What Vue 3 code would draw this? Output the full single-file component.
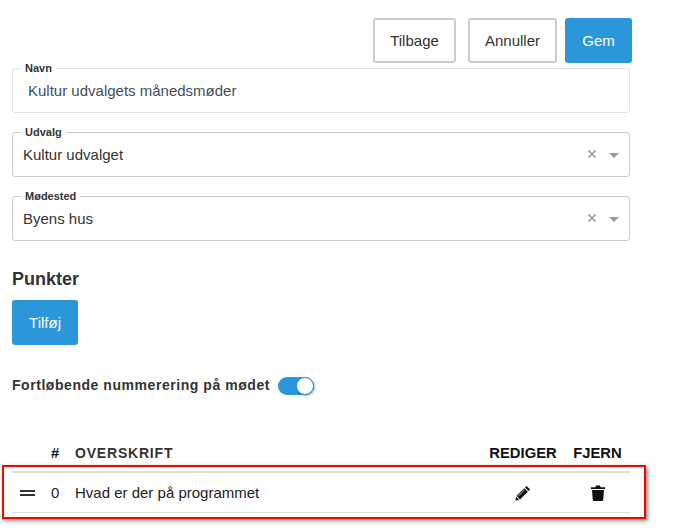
<template>
  <div class="page">
    <div class="actions">
      <button class="btn btn-light back">Tilbage</button>
      <button class="btn btn-light cancel">Annuller</button>
      <button class="btn btn-blue save">Gem</button>
    </div>

    <div class="field name-field">
      <label>Navn</label>
      <span class="value name-value">Kultur udvalgets månedsmøder</span>
    </div>

    <div v-for="s in selects" :key="s.label" class="field select-field">
      <label>{{ s.label }}</label>
      <span class="value">{{ s.value }}</span>
      <svg class="clear" width="10" height="10" viewBox="0 0 10 10">
        <path d="M1.5 1.5 L8.5 8.5 M8.5 1.5 L1.5 8.5" stroke="#999" stroke-width="1.6" fill="none" />
      </svg>
      <span class="caret"></span>
    </div>

    <h3>Punkter</h3>
    <button class="btn btn-blue add">Tilføj</button>

    <div class="numbering">
      <span>Fortløbende nummerering på mødet</span>
      <span class="toggle"><span class="knob"></span></span>
    </div>

    <div class="table">
      <div class="thead">
        <span class="c-drag"></span>
        <span class="c-num">#</span>
        <span class="c-title">OVERSKRIFT</span>
        <span class="c-edit">REDIGER</span>
        <span class="c-del">FJERN</span>
      </div>
      <div class="trow">
        <span class="c-drag"><span class="bars"></span></span>
        <span class="c-num">0</span>
        <span class="c-title">Hvad er der på programmet</span>
        <span class="c-edit">
          <svg width="16" height="16" viewBox="0 0 16 16">
            <path d="M11.6 0.9 L15.1 4.4 L13.5 6 L10 2.5 Z" fill="#111" />
            <path d="M9.3 3.2 L12.8 6.7 L5 14.5 L1.5 11 Z" fill="#111" />
            <path d="M1.1 11.8 L4.2 14.9 L0.4 15.6 Z" fill="#111" />
            <path d="M3 11.4 L9.6 4.8" stroke="#fff" stroke-width="0.7" fill="none" />
          </svg>
        </span>
        <span class="c-del">
          <svg width="14" height="16" viewBox="0 0 14 16">
            <path d="M0 2.2 H4.4 L5 0.6 H9 L9.6 2.2 H14 V4 H0 Z" fill="#111" />
            <path d="M1 5 H13 L12.2 15 Q12.1 16 11.1 16 H2.9 Q1.9 16 1.8 15 Z" fill="#111" />
          </svg>
        </span>
      </div>
    </div>

    <div class="highlight"></div>
  </div>
</template>

<script setup>
const selects = [
  { label: 'Udvalg', value: 'Kultur udvalget' },
  { label: 'Mødested', value: 'Byens hus' }
]
</script>

<style>
html, body {
  background: #fff;
}
</style>

<style scoped>
.page {
  position: relative;
  width: 675px;
  height: 532px;
  overflow: hidden;
  box-sizing: border-box;
  padding: 18px 45px 0 12px;
  font-family: "Liberation Sans", Arial, sans-serif;
  color: #333;
  font-size: 15px;
}

.actions {
  display: flex;
  justify-content: flex-end;
  margin-right: -2px;
}

.btn {
  height: 45px;
  box-sizing: border-box;
  border-radius: 3px;
  font-family: inherit;
  font-size: 15px;
  padding: 0;
  cursor: pointer;
}

.btn-light {
  background: #fff;
  border: 2px solid #ccc;
  color: #333;
}

.btn-blue {
  background: #2b96d9;
  border: none;
  color: #fff;
}

.back { width: 83px; margin-right: 12px; }
.cancel { width: 89px; margin-right: 8px; }
.save { width: 67px; }
.add { width: 66px; display: block; }

.field {
  position: relative;
  height: 45px;
  box-sizing: border-box;
  border: 1px solid #ccc;
  border-radius: 3px;
  display: flex;
  align-items: center;
  padding-left: 10px;
  margin-top: 19px;
  font-size: 15px;
}

.field label {
  position: absolute;
  left: 8px;
  top: -7px;
  padding: 0 4px;
  background: #fff;
  font-size: 11px;
  line-height: 12px;
  font-weight: 700;
  color: #333;
}

.name-field {
  margin-top: 5px;
  border-color: #dde5ee;
}

.name-value {
  padding-left: 5px;
  color: #3f4f5b;
}

.clear {
  position: absolute;
  right: 32px;
  top: 16px;
}

.caret {
  position: absolute;
  right: 10px;
  top: 20px;
  border-left: 5px solid transparent;
  border-right: 5px solid transparent;
  border-top: 5px solid #999;
}

h3 {
  margin: 29px 0 0;
  font-size: 18px;
  line-height: 18px;
  font-weight: 700;
  color: #333;
}

.add {
  margin-top: 12px;
}

.numbering {
  display: flex;
  align-items: center;
  gap: 8px;
  margin-top: 30px;
  font-size: 14px;
  font-weight: 700;
  line-height: 20px;
  height: 20px;
  letter-spacing: 0.55px;
}

.toggle {
  position: relative;
  width: 36px;
  height: 18px;
  margin-top: 2px;
  border-radius: 9px;
  background: #2b96d9;
}

.knob {
  position: absolute;
  right: 0;
  top: 0;
  width: 18px;
  height: 18px;
  box-sizing: border-box;
  border-radius: 50%;
  background: #fff;
  border: 1px solid #2b96d9;
  box-shadow: 1px 1px 2px rgba(0, 0, 0, 0.3);
}

.table {
  margin-top: 48px;
}

.thead,
.trow {
  display: flex;
  align-items: center;
}

.thead {
  height: 20px;
  font-size: 14.8px;
  font-weight: 700;
  color: #111;
}

.thead .c-title {
  color: #333;
  font-size: 14px;
  letter-spacing: 0.8px;
}

.trow {
  height: 42px;
  margin-top: 8px;
  box-sizing: border-box;
  border-top: 2px solid #ddd;
  border-bottom: 1px solid #ddd;
  font-size: 15px;
  color: #222;
}

.c-drag { width: 39px; display: flex; padding-left: 8px; box-sizing: border-box; }
.c-num { width: 24px; }
.c-title { flex: 1; }
.c-edit { width: 90px; text-align: center; }
.c-del { width: 62px; text-align: center; padding-right: 3px; box-sizing: border-box; }

.c-edit svg,
.c-del svg {
  display: inline-block;
  vertical-align: middle;
  margin-top: -2px;
}

.bars {
  width: 15px;
  height: 6px;
  box-sizing: border-box;
  border-top: 2px solid #333;
  border-bottom: 2px solid #333;
}

.highlight {
  position: absolute;
  left: 2px;
  top: 465px;
  width: 644px;
  height: 54px;
  box-sizing: border-box;
  border: 2px solid #f00;
  box-shadow: 2px 2px 4px rgba(0, 0, 0, 0.45);
  pointer-events: none;
}
</style>
